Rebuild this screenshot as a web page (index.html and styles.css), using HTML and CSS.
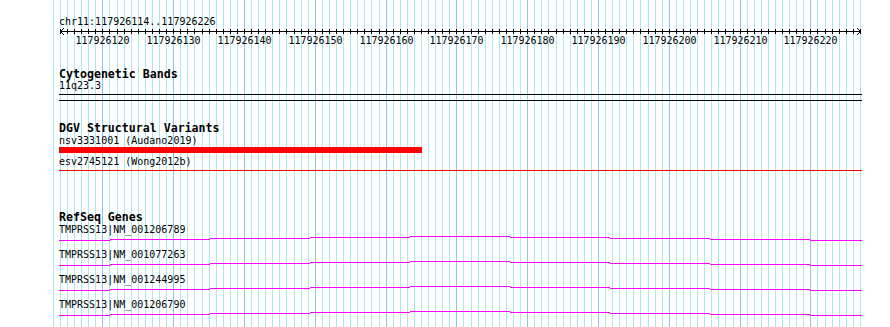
FILE: index.html
```html
<!DOCTYPE html>
<html lang="en">
<head>
    <meta charset="UTF-8">
    <title>chr11:117926114-117926226</title>
    <link rel="stylesheet" href="styles.css">
</head>
<body>
<div id="browser">
    <svg id="guides" width="890" height="327"></svg>

    <div class="ruler">
        <div class="position">chr11:117926114..117926226</div>
        <svg id="axis" width="890" height="21"></svg>
    </div>

    <div class="track cyto">
        <div class="track-title">Cytogenetic Bands</div>
        <div class="label">11q23.3</div>
        <div class="band"></div>
    </div>

    <div class="track dgv">
        <div class="track-title">DGV Structural Variants</div>
        <div class="label first">nsv3331001 (Audano2019)</div>
        <div class="sv-bar" style="width: 363px"></div>
        <div class="label next">esv2745121 (Wong2012b)</div>
        <div class="sv-line"></div>
    </div>

    <div class="track refseq">
        <div class="track-title">RefSeq Genes</div>
        <div class="gene first">
            <div class="label">TMPRSS13|NM_001206789</div>
            <svg class="gene-line" width="803" height="14"></svg>
        </div>
        <div class="gene">
            <div class="label">TMPRSS13|NM_001077263</div>
            <svg class="gene-line" width="803" height="14"></svg>
        </div>
        <div class="gene">
            <div class="label">TMPRSS13|NM_001244995</div>
            <svg class="gene-line" width="803" height="14"></svg>
        </div>
        <div class="gene">
            <div class="label">TMPRSS13|NM_001206790</div>
            <svg class="gene-line" width="803" height="14"></svg>
        </div>
    </div>
</div>

<script>
    var NS = 'http://www.w3.org/2000/svg';
    var START = 117926114;
    var X0 = 60.4;      // left edge of first base
    var BP = 7.08;      // pixels per base

    function baseX(k) {
        return Math.floor(X0 + BP * k);
    }

    function rect(svg, x, y, w, h, cls) {
        var r = document.createElementNS(NS, 'rect');
        r.setAttribute('x', x);
        r.setAttribute('y', y);
        r.setAttribute('width', w);
        r.setAttribute('height', h);
        if (cls) r.setAttribute('class', cls);
        svg.appendChild(r);
    }

    // vertical guidelines, darker every 10 bases
    var oGuides = document.getElementById('guides');
    for (var k = -1; k <= 113; k++) {
        rect(oGuides, baseX(k), 0, 1, 327, (k % 10 == 6) ? 'major' : 'minor');
    }

    // ruler
    var oAxis = document.getElementById('axis');
    rect(oAxis, 60, 4, 801, 1, 'ink');
    for (var k = 0; k <= 113; k++) {
        rect(oAxis, baseX(k), 2, 1, 5, 'ink');
    }
    // arrow heads
    for (var i = 1; i <= 3; i++) {
        rect(oAxis, 60 + i, 4 - i, 1, 1, 'ink');
        rect(oAxis, 60 + i, 4 + i, 1, 1, 'ink');
        rect(oAxis, 860 - i, 4 - i, 1, 1, 'ink');
        rect(oAxis, 860 - i, 4 + i, 1, 1, 'ink');
    }
    for (var k = 6; k <= 106; k += 10) {
        var t = document.createElementNS(NS, 'text');
        t.setAttribute('x', baseX(k) + 0.5);
        t.setAttribute('y', 17);
        t.textContent = START + k;
        oAxis.appendChild(t);
    }

    // gene intron lines (slight stair steps)
    var steps = [[0, 51, 5], [51, 151, 4], [151, 251, 3], [251, 351, 2], [351, 451, 1],
        [451, 551, 2], [551, 651, 3], [651, 751, 4], [751, 803, 5]];
    var aLines = document.querySelectorAll('.gene-line');
    for (var i = 0; i < aLines.length; i++) {
        for (var j = 0; j < steps.length; j++) {
            rect(aLines[i], steps[j][0], steps[j][2], steps[j][1] - steps[j][0], 1);
        }
    }
</script>
</body>
</html>
```

FILE: styles.css
```css
* {
    padding: 0;
    margin: 0;
}

body {
    background: #fff;
    color: #000;
    font-family: "DejaVu Sans Mono", "Liberation Mono", monospace;
    font-size: 10px;
}

#browser {
    position: relative;
    z-index: 0;
    width: 890px;
    height: 327px;
    overflow: hidden;
}

#guides {
    position: absolute;
    left: 0;
    top: 0;
    z-index: -1;
}

#guides .minor {
    fill: #aaeaee;
}

#guides .major {
    fill: #88c8ee;
}

.position {
    padding: 16px 0 0 59px;
    line-height: 11px;
}

#axis {
    display: block;
}

#axis .ink {
    fill: #000;
}

#axis text {
    font-family: "DejaVu Sans Mono", "Liberation Mono", monospace;
    font-size: 10px;
    fill: #000;
    text-anchor: middle;
}

.track {
    padding-left: 59px;
}

.track-title {
    font-size: 11.6px;
    font-weight: bold;
    line-height: 12px;
}

.label {
    line-height: 11px;
    white-space: nowrap;
}

.cyto {
    margin-top: 20px;
}

.band {
    width: 803px;
    height: 7px;
    margin-top: 3px;
    box-sizing: border-box;
    border-top: 1px solid #000;
    border-bottom: 1px solid #000;
}

.dgv {
    margin-top: 21px;
}

.dgv .first {
    margin-top: 1px;
}

.dgv .next {
    margin-top: 3px;
}

.sv-bar {
    height: 6px;
    margin-top: 1px;
    background: #f00;
}

.sv-line {
    width: 803px;
    height: 1px;
    margin-top: 3px;
    background: #e00;
}

.refseq {
    margin-top: 40px;
}

.gene.first {
    margin-top: 1px;
}

.gene-line {
    display: block;
}

.gene-line rect {
    fill: #f0f;
}
```
